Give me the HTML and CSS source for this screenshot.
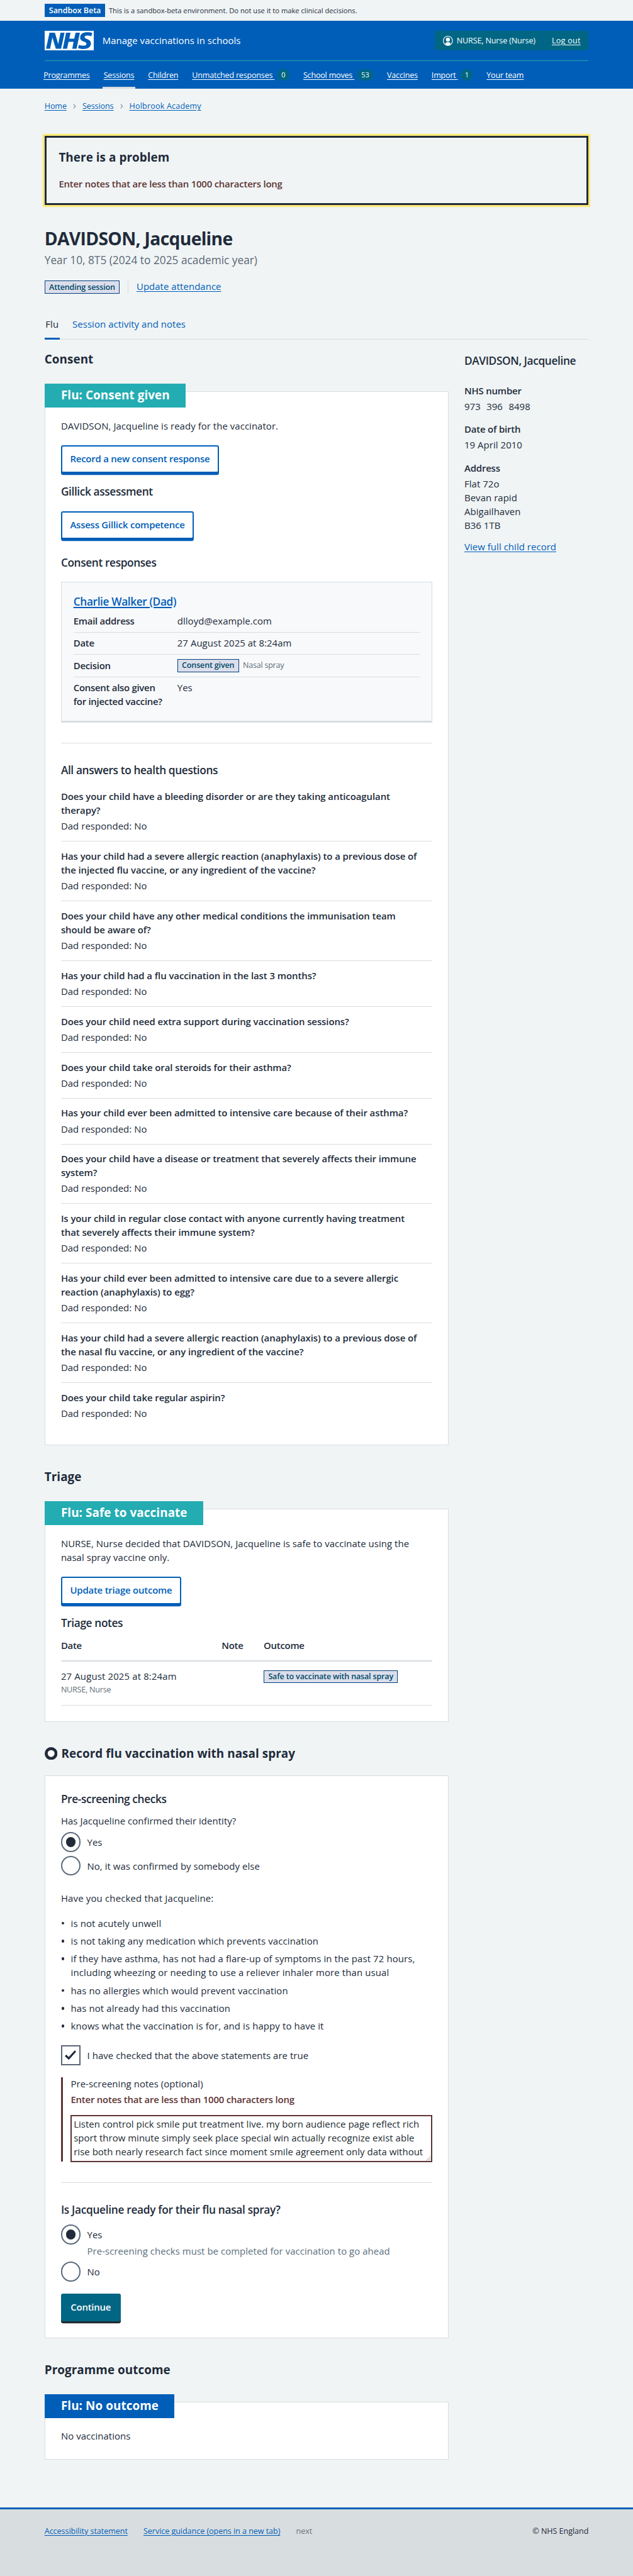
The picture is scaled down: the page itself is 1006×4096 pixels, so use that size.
FILE: index.html
```html
<!DOCTYPE html>
<html lang="en">
<head>
<meta charset="utf-8">
<title>DAVIDSON, Jacqueline – Manage vaccinations in schools</title>
<link rel="stylesheet" href="styles.css">
</head>
<body>
<div class="environment">
  <div class="container environment-inner">
    <strong class="environment-tag">Sandbox Beta</strong>
    <span class="environment-text">This is a sandbox-beta environment. Do not use it to make clinical decisions.</span>
  </div>
</div>

<header class="header">
  <div class="container">
    <div class="header-top">
      <svg class="logo" viewBox="0 0 200 80" role="img" aria-label="NHS"><path fill="currentColor" d="M200 0v80H0V0h200Zm-27.500 5.500c-14.500 0-29 5-29 22 0 10.200 7.700 13.500 14.700 16.300l.7.300c5.400 2 10.100 3.900 10.100 8.400 0 6.500-8.500 7.500-14 7.500s-12.500-1.500-16-3.500L135 70c5.500 2 13.500 3.500 20 3.500 15.500 0 32-4.500 32-22.500 0-19.500-25.500-16.500-25.500-25.500 0-5.500 5.500-6.500 12.500-6.500a35 35 0 0 1 14.500 3l4-13.500c-4.500-2-12-3-20-3Zm-131 2h-22l-14 65H22l9-45h.5l13.500 45h21.500l14-65H64l-9 45h-.5l-13-45Zm63 0h-18l-13 65h17l6-28H117l-5.500 28H129l13.500-65H125L119.500 32h-20l5-24.500Z"/></svg>
      <span class="service">Manage vaccinations in schools</span>
      <div class="account">
        <span class="account-user">
          <svg class="account-icon" viewBox="0 0 20 20" aria-hidden="true"><circle cx="10" cy="10" r="9.300" fill="none" stroke="currentColor" stroke-width="1.400"/><circle cx="10" cy="7.700" r="4.100" fill="currentColor"/><path fill="currentColor" d="M5 18.300v-2.600A3 3 0 0 1 8 12.900h4a3 3 0 0 1 3 2.800v2.600Q10 21 5 18.300Z"/></svg>
          <span>NURSE, Nurse (Nurse)</span>
        </span>
        <span class="account-out"><a class="u">Log out</a></span>
      </div>
    </div>
    <nav class="nav">
      <a class="nav-item"><span class="u">Programmes</span></a>
      <a class="nav-item nav-current"><span class="u">Sessions</span></a>
      <a class="nav-item"><span class="u">Children</span></a>
      <a class="nav-item"><span class="u">Unmatched responses&nbsp;</span><span class="badge">0</span></a>
      <a class="nav-item"><span class="u">School moves&nbsp;</span><span class="badge">53</span></a>
      <a class="nav-item"><span class="u">Vaccines</span></a>
      <a class="nav-item"><span class="u">Import&nbsp;</span><span class="badge">1</span></a>
      <a class="nav-item"><span class="u">Your team</span></a>
    </nav>
  </div>
</header>

<div class="container">
  <nav class="breadcrumb">
    <a class="link">Home</a>
    <svg class="chevron" viewBox="0 0 6 10" aria-hidden="true"><path d="M1 1l4 4-4 4" fill="none" stroke="currentColor" stroke-width="1.400"/></svg>
    <a class="link">Sessions</a>
    <svg class="chevron" viewBox="0 0 6 10" aria-hidden="true"><path d="M1 1l4 4-4 4" fill="none" stroke="currentColor" stroke-width="1.400"/></svg>
    <a class="link">Holbrook Academy</a>
  </nav>

  <section class="error-summary">
    <h2 class="heading-m">There is a problem</h2>
    <p class="error-text">Enter notes that are less than 1000 characters long</p>
  </section>

  <h1 class="heading-xl">DAVIDSON, Jacqueline</h1>
  <p class="caption">Year 10, 8T5 (2024 to 2025 academic year)</p>
  <div class="status">
    <strong class="tag tag-status">Attending session</strong>
    <span class="status-action"><a class="link">Update attendance</a></span>
  </div>

  <nav class="tabs">
    <a class="tab tab-current">Flu</a>
    <a class="tab">Session activity and notes</a>
  </nav>

  <div class="columns">
    <main class="main">
      <h2 class="heading-m consent-heading">Consent</h2>
      <section class="card consent-card">
        <h3 class="card-label teal">Flu: Consent given</h3>
        <p class="card-text">DAVIDSON, Jacqueline is ready for the vaccinator.</p>
        <a class="button">Record a new consent response</a>
        <h4 class="heading-s after-button">Gillick assessment</h4>
        <a class="button">Assess Gillick competence</a>
        <h4 class="heading-s responses-heading">Consent responses</h4>
        <div class="response">
          <h5 class="heading-s"><a class="link">Charlie Walker (Dad)</a></h5>
          <dl class="summary">
            <div class="summary-row"><dt>Email address</dt><dd>dlloyd@example.com</dd></div>
            <div class="summary-row"><dt>Date</dt><dd>27 August 2025 at 8:24am</dd></div>
            <div class="summary-row"><dt>Decision</dt><dd class="decision"><strong class="tag">Consent given</strong><span class="small-grey">Nasal spray</span></dd></div>
            <div class="summary-row"><dt>Consent also given for injected vaccine?</dt><dd>Yes</dd></div>
          </dl>
        </div>
        <hr class="rule">
        <h4 class="heading-s">All answers to health questions</h4>
        <dl class="answers">
          <div class="answer"><dt>Does your child have a bleeding disorder or are they taking anticoagulant therapy?</dt><dd>Dad responded: No</dd></div>
          <div class="answer"><dt>Has your child had a severe allergic reaction (anaphylaxis) to a previous dose of the injected flu vaccine, or any ingredient of the vaccine?</dt><dd>Dad responded: No</dd></div>
          <div class="answer"><dt>Does your child have any other medical conditions the immunisation team should be aware of?</dt><dd>Dad responded: No</dd></div>
          <div class="answer"><dt>Has your child had a flu vaccination in the last 3 months?</dt><dd>Dad responded: No</dd></div>
          <div class="answer"><dt>Does your child need extra support during vaccination sessions?</dt><dd>Dad responded: No</dd></div>
          <div class="answer"><dt>Does your child take oral steroids for their asthma?</dt><dd>Dad responded: No</dd></div>
          <div class="answer"><dt>Has your child ever been admitted to intensive care because of their asthma?</dt><dd>Dad responded: No</dd></div>
          <div class="answer"><dt>Does your child have a disease or treatment that severely affects their immune system?</dt><dd>Dad responded: No</dd></div>
          <div class="answer"><dt>Is your child in regular close contact with anyone currently having treatment that severely affects their immune system?</dt><dd>Dad responded: No</dd></div>
          <div class="answer"><dt>Has your child ever been admitted to intensive care due to a severe allergic reaction (anaphylaxis) to egg?</dt><dd>Dad responded: No</dd></div>
          <div class="answer"><dt>Has your child had a severe allergic reaction (anaphylaxis) to a previous dose of the nasal flu vaccine, or any ingredient of the vaccine?</dt><dd>Dad responded: No</dd></div>
          <div class="answer"><dt>Does your child take regular aspirin?</dt><dd>Dad responded: No</dd></div>
        </dl>
      </section>

      <h2 class="heading-m section-heading">Triage</h2>
      <section class="card triage-card">
        <h3 class="card-label teal">Flu: Safe to vaccinate</h3>
        <p class="card-text">NURSE, Nurse decided that DAVIDSON, Jacqueline is safe to vaccinate using the nasal spray vaccine only.</p>
        <a class="button">Update triage outcome</a>
        <h4 class="heading-s after-button">Triage notes</h4>
        <div class="notes">
          <div class="notes-row notes-head"><span>Date</span><span>Note</span><span>Outcome</span></div>
          <div class="notes-row notes-body">
            <div><p>27 August 2025 at 8:24am</p><p class="small-grey note-author">NURSE, Nurse</p></div>
            <div></div>
            <div class="note-outcome"><strong class="tag">Safe to vaccinate with nasal spray</strong></div>
          </div>
        </div>
      </section>

      <h2 class="heading-m record-heading"><svg class="ring" viewBox="0 0 26 26" aria-hidden="true"><circle cx="13" cy="13" r="10" fill="#fff" stroke="currentColor" stroke-width="6"/></svg><span>Record flu vaccination with nasal spray</span></h2>
      <section class="card record-card">
        <h3 class="heading-s">Pre-screening checks</h3>
        <p class="question">Has Jacqueline confirmed their identity?</p>
        <div class="choices">
          <div class="choice"><span class="radio radio-on"></span><span class="choice-text">Yes</span></div>
          <div class="choice"><span class="radio"></span><span class="choice-text">No, it was confirmed by somebody else</span></div>
        </div>
        <p class="checked-intro">Have you checked that Jacqueline:</p>
        <ul class="bullets">
          <li>is not acutely unwell</li>
          <li>is not taking any medication which prevents vaccination</li>
          <li>if they have asthma, has not had a flare-up of symptoms in the past 72 hours, including wheezing or needing to use a reliever inhaler more than usual</li>
          <li>has no allergies which would prevent vaccination</li>
          <li>has not already had this vaccination</li>
          <li>knows what the vaccination is for, and is happy to have it</li>
        </ul>
        <div class="choice"><span class="checkbox"><svg class="tick" viewBox="0 0 24 20" aria-hidden="true"><path d="M1.500 10.500l6.500 6L21.500 1.500" fill="none" stroke="currentColor" stroke-width="4"/></svg></span><span class="choice-text">I have checked that the above statements are true</span></div>
        <div class="notes-group">
          <p class="notes-label">Pre-screening notes (optional)</p>
          <p class="error-text notes-error">Enter notes that are less than 1000 characters long</p>
          <div class="textarea">Listen control pick smile put treatment live. my born audience page reflect rich<br>sport throw minute simply seek place special win actually recognize exist able<br>rise both nearly research fact since moment smile agreement only data without<svg class="grip" viewBox="0 0 10 10" aria-hidden="true"><path d="M1 9.500L9.500 1M5.500 9.500l4-4" fill="none" stroke="currentColor" stroke-width=".8"/></svg></div>
        </div>
        <hr class="rule">
        <h3 class="heading-s ready-heading">Is Jacqueline ready for their flu nasal spray?</h3>
        <div class="choice"><span class="radio radio-on"></span><span class="choice-text">Yes</span></div>
        <p class="choice-hint">Pre-screening checks must be completed for vaccination to go ahead</p>
        <div class="choice"><span class="radio"></span><span class="choice-text">No</span></div>
        <a class="button button-primary">Continue</a>
      </section>

      <h2 class="heading-m section-heading">Programme outcome</h2>
      <section class="card outcome-card">
        <h3 class="card-label blue">Flu: No outcome</h3>
        <p class="card-text">No vaccinations</p>
      </section>
    </main>

    <aside class="side">
      <h2 class="heading-s">DAVIDSON, Jacqueline</h2>
      <dl class="details">
        <dt>NHS number</dt><dd class="nhs-number"><span>973</span><span>396</span><span>8498</span></dd>
        <dt>Date of birth</dt><dd>19 April 2010</dd>
        <dt>Address</dt><dd>Flat 72o<br>Bevan rapid<br>Abigailhaven<br>B36 1TB</dd>
      </dl>
      <a class="link">View full child record</a>
    </aside>
  </div>
</div>

<footer class="footer">
  <div class="container footer-inner">
    <a class="link">Accessibility statement</a>
    <a class="link">Service guidance (opens in a new tab)</a>
    <span class="footer-muted">next</span>
    <span class="copyright">© NHS England</span>
  </div>
</footer>
</body>
</html>
```
FILE: styles.css
```css
/* 1rem is ten design pixels, with the 1280px design drawn 1006px wide */
html { font-size: 7.859375px; }
* { box-sizing: border-box; }
body {
  margin: 0;
  background: #f0f4f5;
  color: #212b3a;
  font-family: "Open Sans", "Noto Sans", sans-serif;
  font-size: 1.9rem;
  line-height: 2.8rem;
  letter-spacing: .004em;
}
h1, h2, h3, h4, h5, p, dl, dd, ul { margin: 0; padding: 0; }
h1, h2, h3, h4, h5, dt { font-weight: 600; }
.container { width: 110rem; margin: 0 auto; }
.link { color: #005eb8; text-decoration: underline; text-decoration-thickness: 1px; text-underline-offset: .2rem; }
.u { text-decoration: underline; text-decoration-thickness: 1px; text-underline-offset: .25rem; }

.heading-xl { font-size: 3.6rem; line-height: 4.4rem; font-weight: 700; letter-spacing: -.024em; margin-top: 4.57rem; }
.heading-m { font-size: 2.4rem; line-height: 3.2rem; font-weight: 700; }
.heading-s { font-size: 2.2rem; line-height: 2.8rem; letter-spacing: -.022em; }
.heading-s .link { text-decoration-thickness: 2px; }

.environment-inner { display: flex; align-items: center; gap: .7rem; height: 4.2rem; }
.environment-tag { display: flex; align-items: center; height: 2.6rem; padding: .1rem .9rem 0; background: #005eb8; color: #fff; font-size: 1.6rem; font-weight: 600; letter-spacing: -.006em; }
.environment-text { padding-top: .1rem; font-size: 1.42rem; letter-spacing: 0; }

.header { height: 13.7rem; background: #005eb8; color: #fff; }
.header-top { display: flex; align-items: center; height: 8.1rem; border-bottom: 1px solid #22a6a8; }
.logo { display: block; width: 10rem; height: 4rem; }
.service { margin-left: 1.7rem; }
.account { display: flex; height: 4rem; margin-left: auto; font-size: 1.6rem; }
.account-user, .account-out { display: flex; align-items: center; background: #006684; padding: .1rem 1.6rem 0; }
.account-user { gap: .8rem; border-radius: .4rem 0 0 .4rem; border-right: 1px solid #005f9f; letter-spacing: -.012em; }
.account-out { border-radius: 0 .4rem .4rem 0; letter-spacing: .02em; }
.account-icon { width: 2rem; height: 2rem; }
.nav { display: flex; gap: 2.4rem; height: 5.6rem; margin-left: -.4rem; font-size: 1.6rem; letter-spacing: -.016em; }
.nav-item { display: flex; align-items: center; gap: .6rem; padding: .75rem .2rem 0; border-bottom: .4rem solid transparent; }
.nav-current { border-bottom-color: #d8dde0; }
.badge { min-width: 2.4rem; height: 2.2rem; line-height: 2.2rem; margin-top: -.3rem; padding: 0 .8rem; border-radius: 1.1rem; background: #006684; font-size: 1.4rem; text-align: center; letter-spacing: 0; }

.breadcrumb { display: flex; align-items: center; gap: 1.3rem; margin-top: 2.4rem; height: 2.4rem; padding-top: .1rem; font-size: 1.6rem; letter-spacing: -.008em; }
.breadcrumb .link:last-child { letter-spacing: .014em; }
.chevron { width: .6rem; height: 1rem; color: #768692; }

.error-summary { height: 14rem; margin-top: 4.8rem; padding: 2.4rem 2.5rem; border: .4rem solid #212b3a; box-shadow: 0 0 0 .4rem #fde878; }
.error-summary .error-text { margin-top: 2.33rem; }
.error-text { color: #5d3434; font-weight: 600; letter-spacing: -.014em; }
.caption { margin-top: .6rem; font-size: 2.2rem; line-height: 3.2rem; color: #5b6975; letter-spacing: 0; }
.status { display: flex; align-items: center; height: 2.6rem; margin-top: 2.53rem; }
.status-action { margin-left: 1.6rem; padding-left: 1.7rem; border-left: 1px solid #d8dde0; height: 2.6rem; line-height: 2.5rem; }
.tag { display: inline-flex; align-items: center; height: 2.6rem; padding: .1rem .8rem 0; border: 1px solid #00407c; background: #dcdeeb; color: #004a68; font-size: 1.6rem; font-weight: 600; line-height: 1; letter-spacing: -.014em; white-space: nowrap; }
.tag-status { padding-top: .3rem; }
.tabs { display: flex; gap: 2.4rem; margin-top: 4.77rem; height: 4.56rem; border-bottom: 1px solid #d8dde0; }
.tab { padding: 0 .2rem; color: #005eb8; height: 4.56rem; }
.tab-current { color: #212b3a; border-bottom: .4rem solid #005eb8; }

.columns { display: flex; gap: 3.2rem; }
.main { width: 81.7rem; flex: none; }
.side { flex: 1; padding-top: 2.9rem; white-space: nowrap; }

.card { background: #fff; border: 1px solid #d8dde0; padding: 0 3.2rem; display: flex; flex-direction: column; align-items: flex-start; }
.card > * { align-self: stretch; }
.card > .card-label { align-self: flex-start; height: 4.8rem; margin: -1.6rem 0 0 -3.3rem; padding: 0 3.2rem 0 3.3rem; line-height: 4.8rem; font-size: 2.4rem; font-weight: 700; color: #fff; letter-spacing: .004em; }
.teal { background: #23acb2; }
.blue { background: #005eb8; }
.card-text { max-width: 72.8rem; margin-top: 2.25rem; }
.card > .button { align-self: flex-start; }
.button { height: 5.6rem; margin-top: 2.55rem; margin-bottom: .4rem; padding: 0 1.6rem; border: 2px solid #005eb8; border-radius: .4rem; box-shadow: 0 .4rem 0 #005eb8; color: #005eb8; background: #fff; font-weight: 600; line-height: 5.04rem; letter-spacing: -.014em; }
.after-button { margin-top: 2.1rem; }
.consent-heading { margin-top: 2.43rem; }
.consent-card { height: 213.25rem; margin-top: 4.77rem; }
.responses-heading { margin-top: 2.95rem; }
.rule { width: 100%; height: 1px; margin: 4.1rem 0; border: 0; background: #d8dde0; }

.response { height: 28.5rem; margin-top: 2.45rem; padding: 2.5rem 2.4rem 0; background: #f8f9fb; border: 1px solid #d8dde0; border-bottom-width: .4rem; }
.summary { margin-top: .42rem; }
.summary-row { display: grid; grid-template-columns: 21rem 1fr; padding: .65rem 0 .92rem; border-bottom: 1px solid #d8dde0; }
.summary-row:last-child { border-bottom: 0; }
.decision { display: flex; align-items: center; gap: .8rem; height: 3rem; margin-bottom: -.2rem; }
.summary dt { padding-right: 2rem; letter-spacing: -.018em; }
.small-grey { color: #5f6f78; font-size: 1.6rem; line-height: 2.4rem; letter-spacing: -.018em; }

.answers { margin-top: .9rem; }
.answer { padding: 1.5rem 0 1.65rem; border-bottom: 1px solid #d8dde0; }
.answer:last-child { border-bottom: 0; }
.answer dt { max-width: 72.6rem; margin-bottom: .4rem; letter-spacing: -.004em; }

.section-heading { margin-top: 4.88rem; }
.triage-card { height: 43.1rem; margin-top: 4.77rem; }
.notes-row { display: grid; grid-template-columns: 32.5rem 8.5rem 1fr; }
.notes-head { margin-top: 1.6rem; padding-bottom: 1.7rem; border-bottom: 2px solid #d8dde0; font-weight: 600; letter-spacing: -.018em; }
.notes-body { padding: 1.5rem 0 1.73rem; border-bottom: 1px solid #d8dde0; }
.notes-body p:first-child { letter-spacing: .01em; }
.note-author { margin-top: .3rem; }
.note-outcome { height: 3rem; display: flex; align-items: center; }

.record-heading { display: flex; align-items: center; gap: .8rem; margin-top: 4.83rem; }
.ring { width: 2.6rem; height: 2.6rem; }
.record-card { height: 113.8rem; margin-top: 2.86rem; padding-top: 3.25rem; }
.question { margin-top: 1.53rem; }
.choices { display: flex; flex-direction: column; gap: .8rem; margin-top: .95rem; }
.choice { display: flex; gap: 1.3rem; height: 4rem; flex: none; }
.choice-text { padding-top: .63rem; }
.radio { width: 4rem; height: 4rem; border: 2px solid #5c6b7b; border-radius: 50%; background: #fff; display: flex; align-items: center; justify-content: center; }
.radio-on::after { content: ""; width: 2rem; height: 2rem; border-radius: 50%; background: #212b3a; }
.checked-intro { margin-top: 3.1rem; letter-spacing: .012em; }
.bullets { display: flex; flex-direction: column; gap: .8rem; margin: 2.3rem 0 2.58rem; padding-left: 2rem; list-style: none; letter-spacing: .008em; }
.bullets li::before { content: ""; float: left; width: .6rem; height: .6rem; margin: 1.15rem 0 0 -1.9rem; border-radius: 50%; background: #212b3a; }
.checkbox { width: 4rem; height: 4rem; border: 2px solid #5c6478; display: flex; align-items: center; justify-content: center; }
.tick { width: 2.4rem; height: 2rem; }
.notes-group { height: 17.15rem; margin-top: 2.4rem; padding-left: 1.6rem; border-left: .4rem solid #5d3434; }
.notes-label { margin-top: -.12rem; }
.notes-error { margin-top: .4rem; }
.textarea { position: relative; height: 9.55rem; margin-top: 1.75rem; padding: .2rem .35rem; border: 2px solid #5d3434; background: #fff; white-space: nowrap; color: #212b32; letter-spacing: .003em; }
.grip { position: absolute; right: 0; bottom: 0; width: 1rem; height: 1rem; color: #555; }
.ready-heading { margin: -.05rem 0 1.65rem; letter-spacing: -.018em; }
.choice-hint { margin: -.15rem 0 .85rem; padding-left: 5.3rem; color: #5b6f7c; }
.button-primary { margin-top: 2.4rem; padding: 0 1.7rem; border-color: #006684; background: #006684; color: #fff; box-shadow: 0 .4rem 0 #212b32; }
.outcome-card { height: 11.8rem; margin-top: 4.77rem; }

.details { margin-top: 3.15rem; }
.details dt { margin-bottom: .4rem; letter-spacing: -.012em; }
.details dd { margin-bottom: 1.83rem; }
.details dd:last-child { margin-bottom: 1.6rem; }
.nhs-number { display: flex; gap: 1.2rem; }

.footer { height: 13.95rem; margin-top: 9.6rem; border-top: .4rem solid #005eb8; background: #d8dde0; }
.footer-inner { display: flex; gap: 3.2rem; padding-top: 3.3rem; font-size: 1.6rem; line-height: 2.4rem; letter-spacing: -.004em; }
.footer-muted { color: #68777c; }
.copyright { margin-left: auto; }
```
